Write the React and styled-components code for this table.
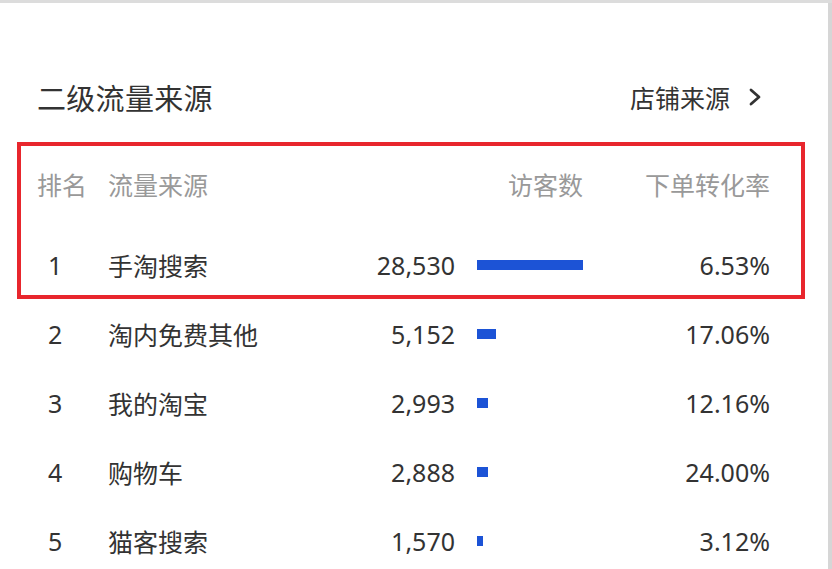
import React from 'react';
import styled, {createGlobalStyle} from 'styled-components';

const GlobalStyle = createGlobalStyle`
  html, body {
    margin: 0;
    padding: 0;
    background: #fff;
  }
  body {
    font-family: "Noto Sans", "Noto Sans CJK SC", sans-serif;
    color: #333;
  }
`;

const rows = [
  {rank: 1, source: '手淘搜索', visitors: 28530, rate: '6.53%'},
  {rank: 2, source: '淘内免费其他', visitors: 5152, rate: '17.06%'},
  {rank: 3, source: '我的淘宝', visitors: 2993, rate: '12.16%'},
  {rank: 4, source: '购物车', visitors: 2888, rate: '24.00%'},
  {rank: 5, source: '猫客搜索', visitors: 1570, rate: '3.12%'},
];

const MAX_BAR = 106;
const maxVisitors = Math.max(...rows.map(r => r.visitors));

const Frame = styled.div`
  width: 832px;
  height: 569px;
  display: flex;
  overflow: hidden;
  border-top: 3px solid #dcdcdc;
  box-sizing: border-box;
`;

const Scrollbar = styled.div`
  width: 4px;
  margin-left: 1px;
  background: #d6d6d6;
`;

const Card = styled.div`
  flex: 1;
  display: flex;
  flex-direction: column;
`;

const TopRule = styled.div`
  height: 4px;
  margin: 3px 4px 0 0;
  background: linear-gradient(#f0f0f0, #f7f7f7);
`;

const Heading = styled.div`
  display: flex;
  align-items: center;
  justify-content: space-between;
  height: 40px;
  margin-top: 71px;
  padding: 0 65px 0 37px;
`;

const Title = styled.h2`
  margin: 0;
  font-size: 29px;
  font-weight: 400;
  color: #333;
  letter-spacing: 0.3px;
`;

const Link = styled.a`
  display: flex;
  align-items: center;
  gap: 18px;
  font-size: 25px;
  color: #333;
  text-decoration: none;
`;

const Highlight = styled.div`
  margin: 25px 22px 0 17px;
  border: 4px solid #e8262d;
  padding: 0 31px 0 16px;
`;

const Row = styled.div`
  display: grid;
  grid-template-columns: 71px 1fr 84px 22px ${MAX_BAR}px 187px;
  align-items: center;
  height: ${p => p.$height || 69}px;
  margin-top: ${p => p.$gap || 0}px;
  font-size: 25px;
  color: ${p => (p.$head ? '#999' : '#333')};
`;

const Body = styled.div`
  padding: 0 57px 0 37px;
`;

const Rank = styled.span`
  padding-left: ${p => (p.$head ? 0 : 11)}px;
`;

const Num = styled.span`
  text-align: right;
  white-space: nowrap;
`;

const HeadVisitors = styled.span`
  grid-column: 3 / 6;
  text-align: right;
`;

const Track = styled.div`
  grid-column: 5;
  height: 10px;
`;

const Bar = styled.div`
  height: 100%;
  background: #1c53d6;
`;

const Rate = styled.span`
  text-align: right;
`;

const Chevron = () => (
  <svg width="14" height="20" viewBox="0 0 14 20">
    <polyline points="3,3 11,10 3,17" fill="none" stroke="#333" strokeWidth="2.8" strokeLinecap="round" strokeLinejoin="round"/>
  </svg>
);

const DataRow = ({row, height, gap}) => (
  <Row $height={height} $gap={gap}>
    <Rank>{row.rank}</Rank>
    <span>{row.source}</span>
    <Num>{row.visitors.toLocaleString('en-US')}</Num>
    <Track>
      <Bar style={{width: Math.max(3, Math.round(row.visitors / maxVisitors * MAX_BAR))}}/>
    </Track>
    <Rate>{row.rate}</Rate>
  </Row>
);

export default function App() {
  const [first, ...rest] = rows;
  return (
    <>
      <GlobalStyle/>
      <Frame>
        <Card>
          <TopRule/>
          <Heading>
            <Title>二级流量来源</Title>
            <Link href="#">店铺来源<Chevron/></Link>
          </Heading>
          <Highlight>
            <Row $head $height={76}>
              <Rank $head>排名</Rank>
              <span>流量来源</span>
              <HeadVisitors>访客数</HeadVisitors>
              <Rate>下单转化率</Rate>
            </Row>
            <DataRow row={first} height={60} gap={13}/>
          </Highlight>
          <Body>
            {rest.map(r => <DataRow key={r.rank} row={r}/>)}
          </Body>
        </Card>
        <Scrollbar/>
      </Frame>
    </>
  );
}
